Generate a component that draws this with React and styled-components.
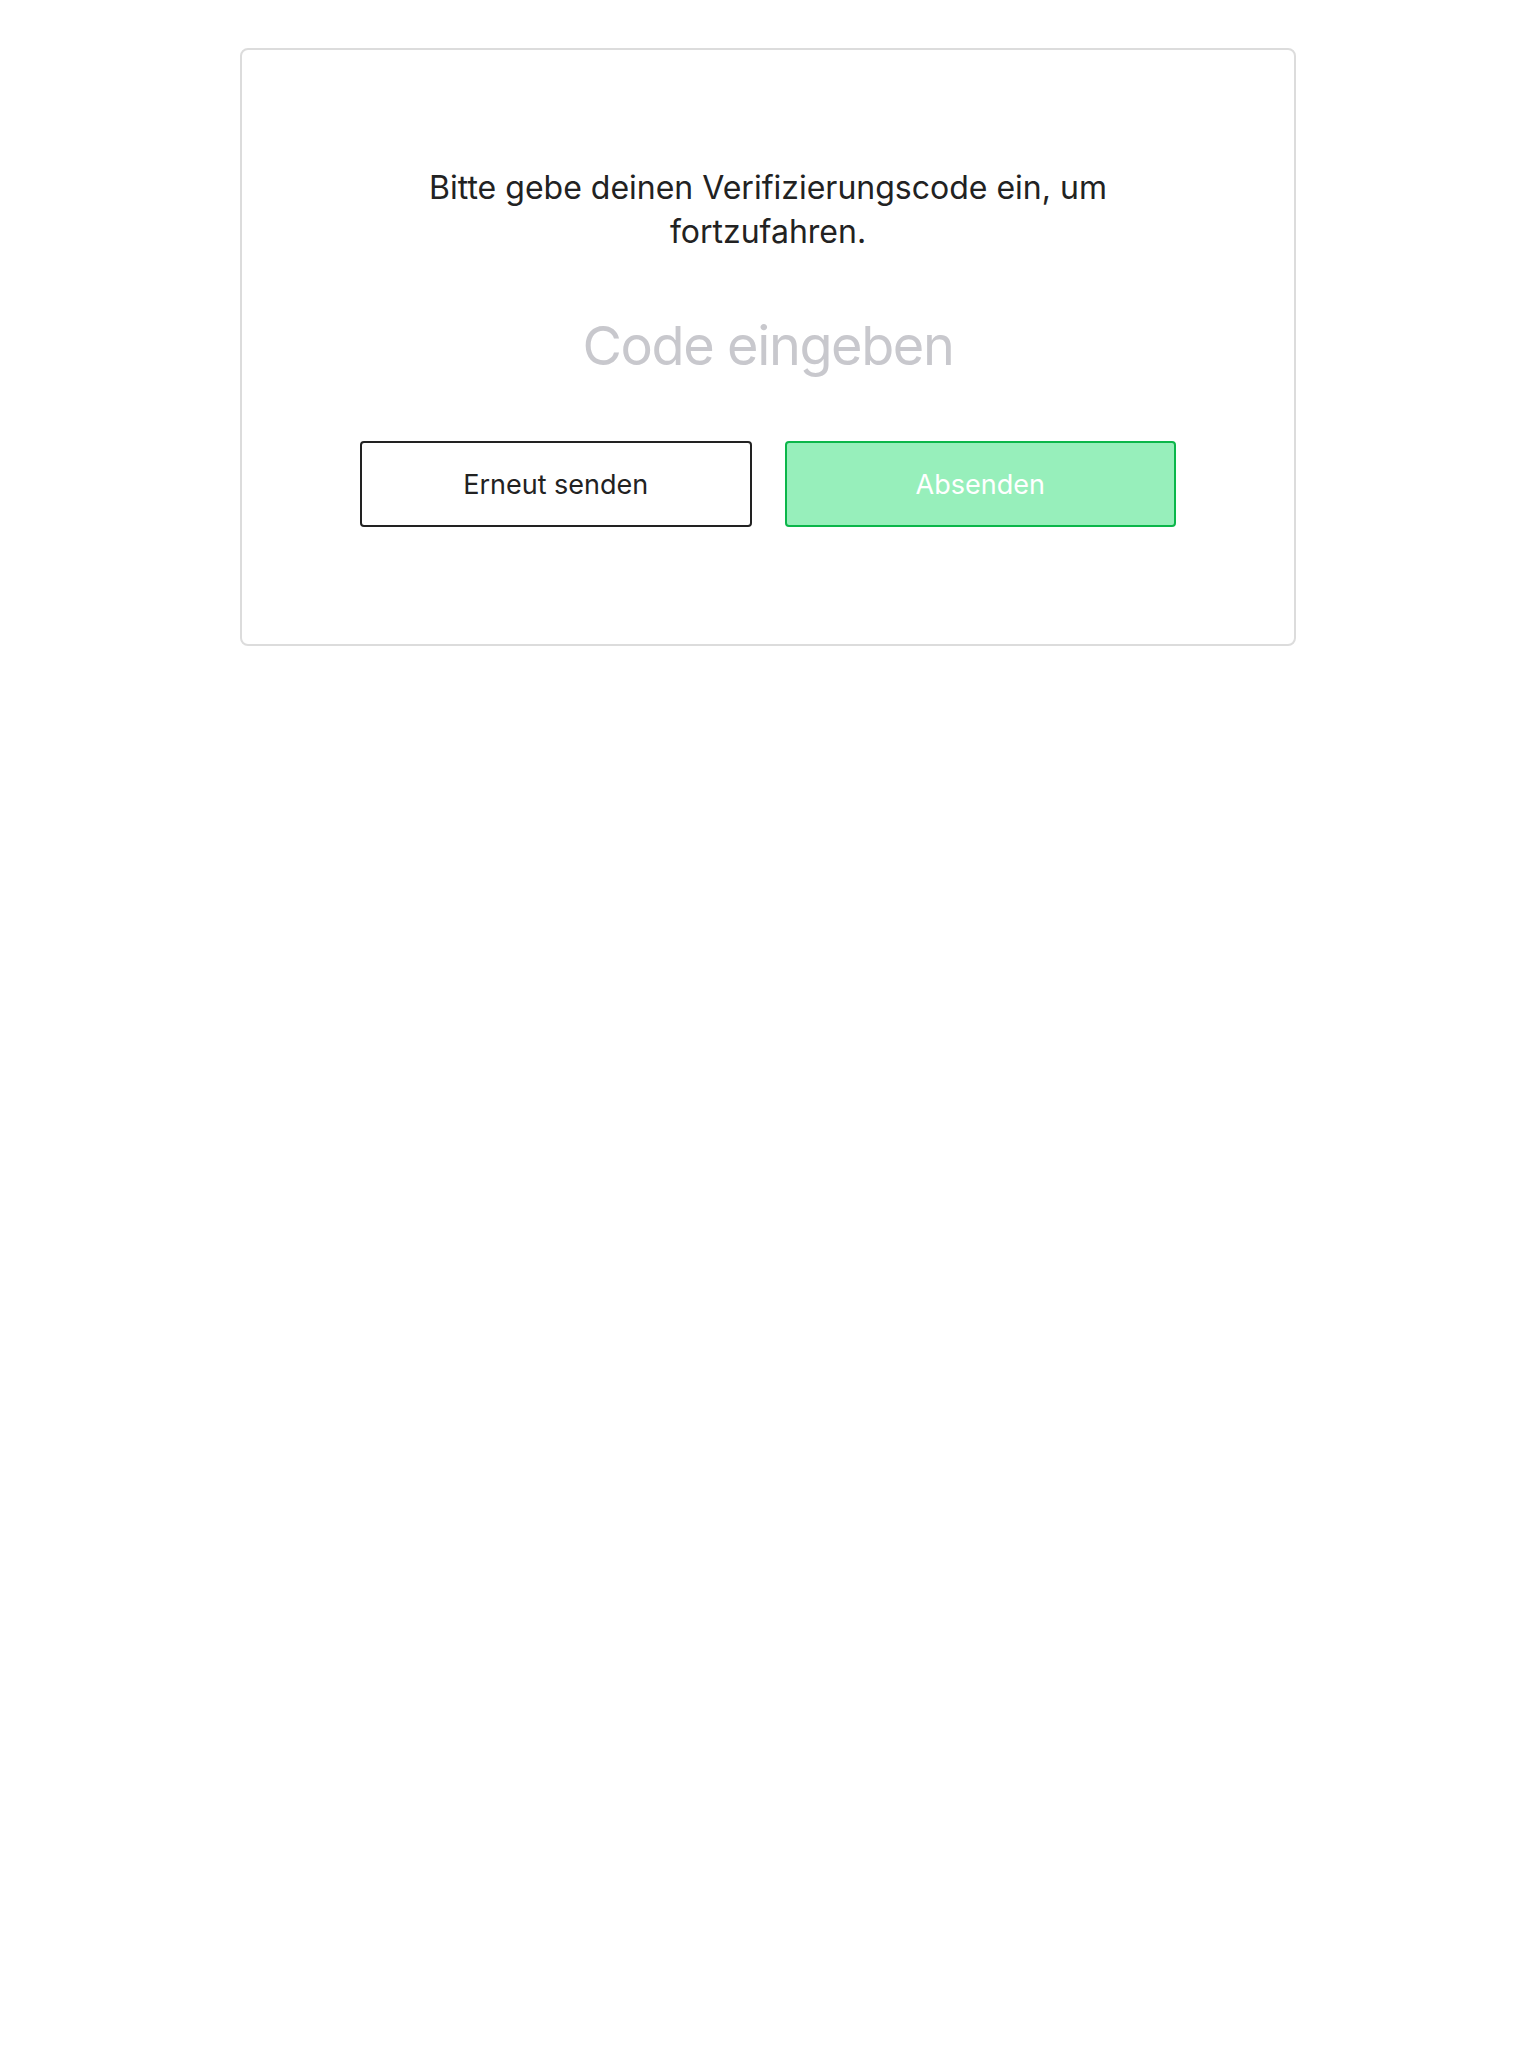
import React from "react";
import styled, { createGlobalStyle } from "styled-components";

const GlobalStyle = createGlobalStyle`
  html, body {
    margin: 0;
    padding: 0;
    background: #ffffff;
    font-family: Inter, "Noto Sans", "Liberation Sans", sans-serif;
  }
  * { box-sizing: border-box; }
`;

const Page = styled.div`
  display: flex;
  justify-content: center;
  padding-top: 48px;
`;

const Card = styled.div`
  width: 1056px;
  border: 2px solid #dcdcdc;
  border-radius: 8px;
  padding: 116px 118px 117px;
  display: flex;
  flex-direction: column;
  align-items: center;
`;

const Prompt = styled.p`
  margin: 0;
  max-width: 760px;
  text-align: center;
  font-size: 32px;
  line-height: 44px;
  color: #222222;
`;

const CodeInput = styled.input`
  margin-top: 56px;
  width: 100%;
  border: none;
  outline: none;
  background: transparent;
  text-align: center;
  font-family: inherit;
  font-size: 54px;
  letter-spacing: -1.4px;
  line-height: 72px;
  height: 72px;
  color: #222222;
  padding: 0;
  &::placeholder {
    color: #c8c8cd;
  }
`;

const Actions = styled.div`
  margin-top: 59px;
  width: 816px;
  display: grid;
  grid-template-columns: 1fr 1fr;
  gap: 33px;
`;

const Button = styled.button`
  height: 86px;
  border-radius: 4px;
  font-family: inherit;
  font-size: 27px;
  cursor: pointer;
  border: 2px solid ${(p) => (p.$primary ? "#0bb64a" : "#222222")};
  background: ${(p) => (p.$primary ? "#97efbb" : "#ffffff")};
  color: ${(p) => (p.$primary ? "#ffffff" : "#222222")};
`;

export default function App() {
  return (
    <>
      <GlobalStyle />
      <Page>
        <Card>
          <Prompt>Bitte gebe deinen Verifizierungscode ein, um fortzufahren.</Prompt>
          <CodeInput placeholder="Code eingeben" />
          <Actions>
            <Button>Erneut senden</Button>
            <Button $primary>Absenden</Button>
          </Actions>
        </Card>
      </Page>
    </>
  );
}
